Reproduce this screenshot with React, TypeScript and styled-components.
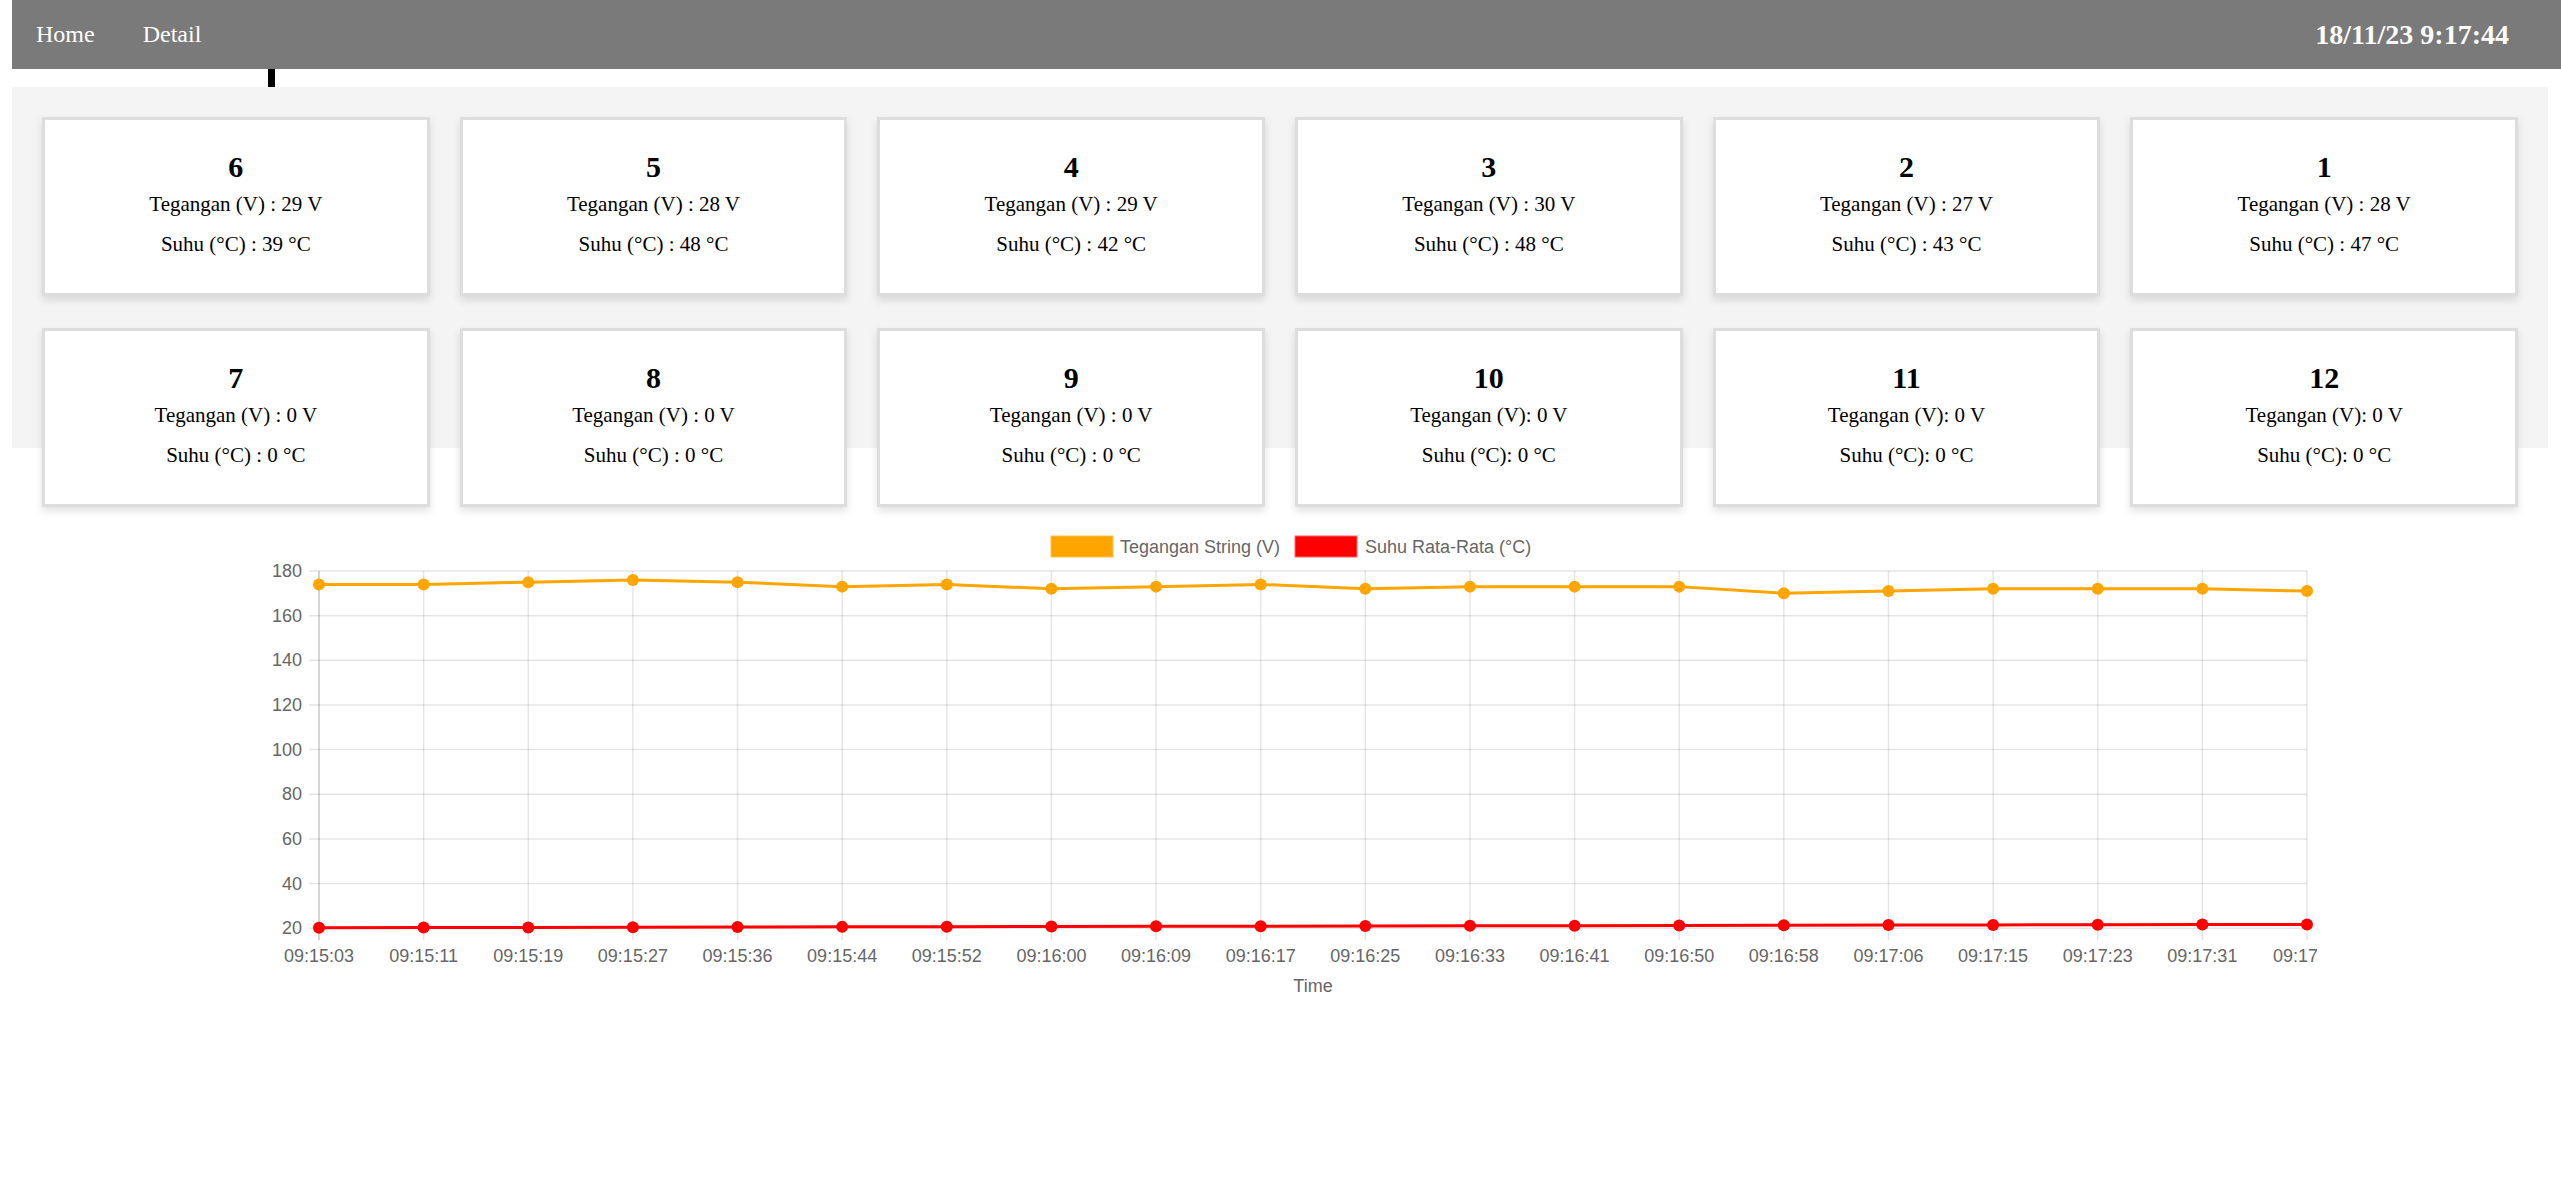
import React from "react";
import styled, { createGlobalStyle } from "styled-components";

const GlobalStyle = createGlobalStyle`
  html, body { margin: 0; padding: 0; background: #ffffff; }
  body { font-family: "Liberation Serif", "Times New Roman", serif; color: #000; }
`;

const Page = styled.div`
  padding: 0 13px 0 12px;
  min-height: 1204px;
  box-sizing: border-box;
`;

const Header = styled.header`
  height: 69px;
  margin-right: -13px;
  background: #7a7a7a;
  display: flex;
  align-items: center;
  justify-content: space-between;
  padding: 0 52px 0 24px;
  color: #ffffff;
`;

const Nav = styled.nav`
  display: flex;
  gap: 48px;
`;

const NavLink = styled.a`
  font-family: "Liberation Serif", serif;
  font-size: 24px;
  color: #ffffff;
  text-decoration: none;
`;

const Clock = styled.div`
  font-family: "Liberation Serif", serif;
  font-size: 28px;
  font-weight: bold;
`;

const Gutter = styled.div`
  height: 18px;
  display: flex;
`;

const Caret = styled.span`
  width: 7px;
  height: 18px;
  margin-left: 256px;
  background: #000;
`;

const Panel = styled.section`
  background: #f4f4f4;
  height: 361px;
  padding: 30px;
  box-sizing: border-box;
  display: grid;
  grid-template-columns: repeat(6, 1fr);
  grid-auto-rows: 179px;
  column-gap: 30px;
  row-gap: 32px;
`;

const Card = styled.div`
  background: #ffffff;
  border: 3px solid #dddddd;
  box-shadow: 0 4px 8px rgba(0, 0, 0, 0.12);
  display: flex;
  flex-direction: column;
  align-items: center;
  padding-top: 32px;
  box-sizing: border-box;
`;

const CardTitle = styled.h2`
  margin: 0 0 10px;
  font-size: 30px;
  line-height: 30px;
  font-weight: bold;
`;

const CardLine = styled.p<{ $gap?: number }>`
  margin: ${(p) => p.$gap ?? 0}px 0 0;
  font-size: 21px;
  line-height: 24px;
`;

const ChartBox = styled.div`
  margin: 72px 0 0 251px;
  width: 2054px;
  height: 500px;
`;

const ChartSvg = styled.svg`
  display: block;
  overflow: hidden;
  font-family: "Liberation Sans", Arial, sans-serif;
`;

type Cell = { id: number; v: string; t: string };

const cards: Cell[] = [
  { id: 6, v: "Tegangan (V) : 29 V", t: "Suhu (°C) : 39 °C" },
  { id: 5, v: "Tegangan (V) : 28 V", t: "Suhu (°C) : 48 °C" },
  { id: 4, v: "Tegangan (V) : 29 V", t: "Suhu (°C) : 42 °C" },
  { id: 3, v: "Tegangan (V) : 30 V", t: "Suhu (°C) : 48 °C" },
  { id: 2, v: "Tegangan (V) : 27 V", t: "Suhu (°C) : 43 °C" },
  { id: 1, v: "Tegangan (V) : 28 V", t: "Suhu (°C) : 47 °C" },
  { id: 7, v: "Tegangan (V) : 0 V", t: "Suhu (°C) : 0 °C" },
  { id: 8, v: "Tegangan (V) : 0 V", t: "Suhu (°C) : 0 °C" },
  { id: 9, v: "Tegangan (V) : 0 V", t: "Suhu (°C) : 0 °C" },
  { id: 10, v: "Tegangan (V): 0 V", t: "Suhu (°C): 0 °C" },
  { id: 11, v: "Tegangan (V): 0 V", t: "Suhu (°C): 0 °C" },
  { id: 12, v: "Tegangan (V): 0 V", t: "Suhu (°C): 0 °C" },
];

const labels = [
  "09:15:03", "09:15:11", "09:15:19", "09:15:27", "09:15:36", "09:15:44", "09:15:52",
  "09:16:00", "09:16:09", "09:16:17", "09:16:25", "09:16:33", "09:16:41", "09:16:50",
  "09:16:58", "09:17:06", "09:17:15", "09:17:23", "09:17:31", "09:17",
];

const volt = [174, 174, 175, 176, 175, 173, 174, 172, 173, 174, 172, 173, 173, 173, 170, 171, 172, 172, 172, 171];
const temp = labels.map((_, i) => 20.2 + (i * 1.5) / 19);

const X0 = 56;
const X1 = 2044;
const YTOP = 51;
const PER = 357.2 / 160;
const xAt = (i: number) => X0 + (i * (X1 - X0)) / (labels.length - 1);
const yAt = (v: number) => YTOP + (180 - v) * PER;
const ticks = [20, 40, 60, 80, 100, 120, 140, 160, 180];
const GRID = "rgba(0,0,0,0.1)";
const LAST = labels.length - 1;

function Series({ data, color }: { data: number[]; color: string }) {
  const pts = data.map((v, i) => `${xAt(i)},${yAt(v)}`).join(" ");
  return (
    <g>
      <polyline points={pts} fill="none" stroke={color} strokeWidth={3} strokeLinejoin="round" />
      {data.map((v, i) => (
        <circle key={i} cx={xAt(i)} cy={yAt(v)} r={6} fill={color} />
      ))}
    </g>
  );
}

function Chart() {
  const bottom = yAt(20);
  return (
    <ChartBox>
      <ChartSvg width={2054} height={500} viewBox="0 0 2054 500">
        <rect x={788} y={16} width={62} height={21} fill="#FFA500" stroke="#ffc04d" strokeWidth={1} />
        <text x={857} y={33} fontSize={18} fill="#666">Tegangan String (V)</text>
        <rect x={1032} y={16} width={62} height={21} fill="#FF0000" stroke="#ff6666" strokeWidth={1} />
        <text x={1102} y={33} fontSize={18} fill="#666">Suhu Rata-Rata (°C)</text>

        {ticks.map((t) => (
          <g key={t}>
            <line x1={X0 - 10} x2={X1} y1={yAt(t)} y2={yAt(t)} stroke={GRID} strokeWidth={1.5} />
            <text x={39} y={yAt(t) + 6} fontSize={18} fill="#666" textAnchor="end">{t}</text>
          </g>
        ))}
        {labels.map((l, i) => (
          <g key={l}>
            <line
              x1={xAt(i)}
              x2={xAt(i)}
              y1={YTOP}
              y2={bottom + 12}
              stroke={i === 0 ? "rgba(0,0,0,0.22)" : GRID}
              strokeWidth={1.5}
            />
            {i === LAST ? (
              <text x={xAt(i) - 34} y={442} fontSize={18} fill="#666" textAnchor="start">{l}</text>
            ) : (
              <text x={xAt(i)} y={442} fontSize={18} fill="#666" textAnchor="middle">{l}</text>
            )}
          </g>
        ))}
        <text x={(X0 + X1) / 2} y={472} fontSize={18} fill="#666" textAnchor="middle">Time</text>

        <Series data={volt} color="#FFA500" />
        <Series data={temp} color="#FF0000" />
      </ChartSvg>
    </ChartBox>
  );
}

export default function App() {
  return (
    <>
      <GlobalStyle />
      <Page>
        <Header>
          <Nav>
            <NavLink href="#">Home</NavLink>
            <NavLink href="#">Detail</NavLink>
          </Nav>
          <Clock>18/11/23 9:17:44</Clock>
        </Header>
        <Gutter>
          <Caret />
        </Gutter>
        <Panel>
          {cards.map((c) => (
            <Card key={c.id}>
              <CardTitle>{c.id}</CardTitle>
              <CardLine>{c.v}</CardLine>
              <CardLine $gap={16}>{c.t}</CardLine>
            </Card>
          ))}
        </Panel>
        <Chart />
      </Page>
    </>
  );
}
